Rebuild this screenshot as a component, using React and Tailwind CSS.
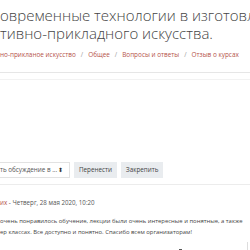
export default function App() {
  return (
    <div className="w-[250px] h-[250px] overflow-hidden bg-white font-['Open_Sans','Liberation_Sans',sans-serif] text-[#373a3c]">
      <div className="h-[60px] pt-[6px]">
        <h1 className="text-[15px] leading-[18px] font-light text-[#444] whitespace-nowrap">
          <div className="h-[18px]">овременные технологии в изготовл</div>
          <div className="h-[18px]">тивно-прикладного искусства.</div>
        </h1>
        <div className="mt-[8px] h-[10px] flex items-center gap-[5px] text-[6.4px] leading-[10px] whitespace-nowrap text-[#999]">
          <span className="text-[#b5524a]">но-прикланое искусство</span>
          <span>/</span>
          <span className="text-[#b5524a]">Общее</span>
          <span>/</span>
          <span className="text-[#b5524a]">Вопросы и ответы</span>
          <span>/</span>
          <span className="text-[#b5524a]">Отзыв о курсах</span>
        </div>
      </div>
      <div className="mt-[12px] h-px bg-[#e6e6e6]" />
      <div className="mt-[6px] h-px bg-[#f2f2f2]" />
      <div className="mt-[82px] h-[16px] flex items-center gap-[4px] text-[6.3px] whitespace-nowrap">
        <div className="h-[16px] w-[70px] border border-[#e2e2e2] border-l-0 flex items-center justify-between pr-[6px] text-[#555]">
          <span>ть обсуждение в ...</span>
          <span className="text-[6px] text-[#333]">⬍</span>
        </div>
        <div className="h-[16px] px-[5px] bg-[#e9ecef] flex items-center text-[#444]">Перенести</div>
        <div className="h-[16px] px-[5px] bg-[#e9ecef] flex items-center text-[#444]">Закрепить</div>
      </div>
      <div className="mt-[6px] h-px bg-[#ececec]" />
      <div className="mt-[13px] h-[10px] text-[6.2px] leading-[10px] whitespace-nowrap text-[#555]">
        <span className="text-[#b5524a]">их</span> - Четверг, 28 мая 2020, 10:20
      </div>
      <div className="mt-[8px] text-[5.9px] leading-[11px] whitespace-nowrap text-[#444]">
        <div>очень понравилось обучение, лекции были очень интересные и понятные, а также</div>
        <div>ер классах. Все доступно и понятно. Спасибо всем организаторам!</div>
      </div>
      <div className="mt-[3px] h-[10px] flex items-end">
        <div className="ml-[179px] w-[3px] h-[2px] bg-[#555]" />
        <div className="ml-auto mr-[2px] w-px h-[9px] bg-[#ddd]" />
      </div>
    </div>
  );
}
